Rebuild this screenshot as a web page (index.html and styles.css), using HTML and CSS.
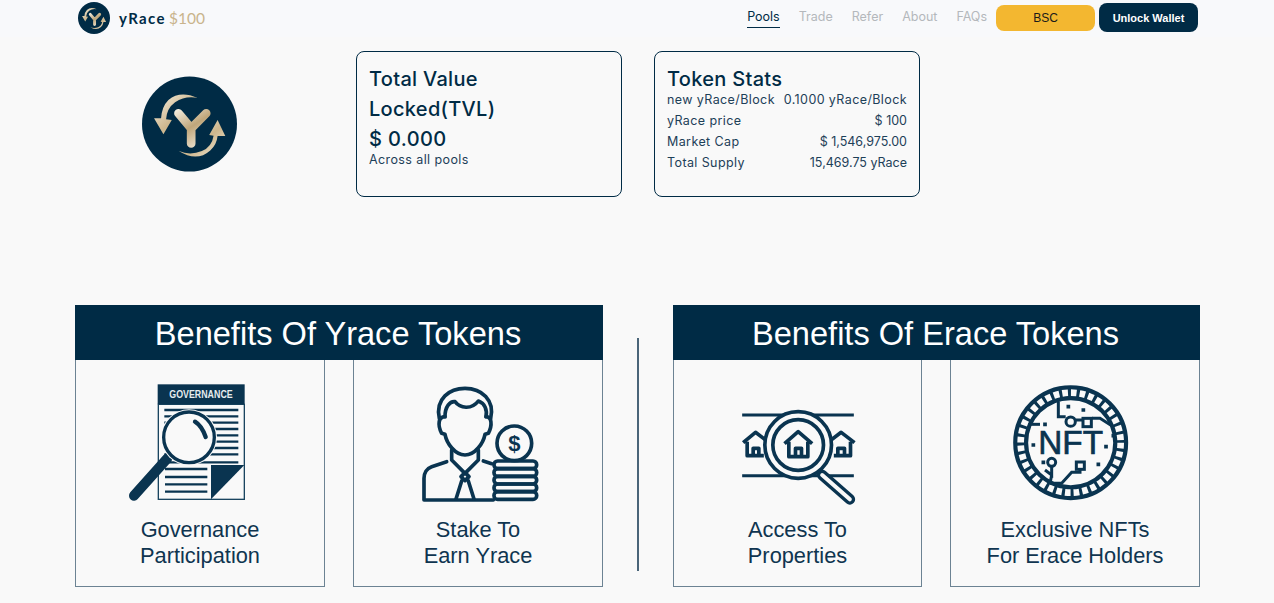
FILE: index.html
```html
<!DOCTYPE html>
<html lang="en">
<head>
<meta charset="utf-8">
<title>yRace</title>
<link rel="stylesheet" href="styles.css">
</head>
<body>
<svg class="defs" width="0" height="0" aria-hidden="true">
  <defs>
    <linearGradient id="gold" x1="0" y1="0" x2="1" y2="1">
      <stop offset="0" stop-color="#f7f1e4"/>
      <stop offset="0.55" stop-color="#cdb68c"/>
      <stop offset="1" stop-color="#f4ecdc"/>
    </linearGradient>
    <linearGradient id="goldY" gradientUnits="userSpaceOnUse" x1="135" y1="135" x2="210" y2="250">
      <stop offset="0" stop-color="#f5efe2"/>
      <stop offset="0.5" stop-color="#bfa67a"/>
      <stop offset="1" stop-color="#f0e8d8"/>
    </linearGradient>
    <symbol id="logo" viewBox="36 35 284 284">
      <circle cx="178" cy="177" r="142" fill="#002b45"/>
      <path d="M145 145 L183 190 L228 145 M183 190 V235" fill="none" stroke="url(#goldY)" stroke-width="26" stroke-linecap="round" stroke-linejoin="round"/>
      <path d="M202 99 Q150 76 115 105 Q95 125 93 160 L72 160 L100 208 L125 165 L108 163 Q110 130 135 112 Q165 92 202 99Z" fill="url(#gold)"/>
      <path d="M146 258 Q200 292 240 256 Q259 240 262 213 L285 213 L262 165 L237 210 L250 212 Q245 245 215 258 Q180 272 146 258Z" fill="url(#gold)"/>
    </symbol>
  </defs>
</svg>

<header class="topbar">
  <a class="brand" href="#">
    <svg class="brand-logo"><use href="#logo"/></svg>
    <span class="brand-name">yRace</span>
    <span class="brand-price">$100</span>
  </a>
  <nav class="nav">
    <a class="nav-link nav-active" href="#">Pools</a>
    <a class="nav-link" href="#">Trade</a>
    <a class="nav-link" href="#">Refer</a>
    <a class="nav-link" href="#">About</a>
    <a class="nav-link" href="#">FAQs</a>
  </nav>
  <button class="btn btn-chain">BSC</button>
  <button class="btn btn-wallet">Unlock Wallet</button>
</header>

<main>
  <section class="overview">
    <svg class="hero-logo"><use href="#logo"/></svg>
    <div class="stat-card">
      <h2 class="stat-title stat-title-tall">Total Value Locked(TVL)</h2>
      <div class="stat-amount">$ 0.000</div>
      <div class="stat-note">Across all pools</div>
    </div>
    <div class="stat-card">
      <h2 class="stat-title">Token Stats</h2>
      <div class="stat-row"><span>new yRace/Block</span><span>0.1000 yRace/Block</span></div>
      <div class="stat-row"><span>yRace price</span><span class="stat-num">$ 100</span></div>
      <div class="stat-row"><span>Market Cap</span><span class="stat-num">$ 1,546,975.00</span></div>
      <div class="stat-row"><span>Total Supply</span><span class="stat-num">15,469.75 yRace</span></div>
    </div>
  </section>

  <section class="benefits">
    <div class="group group-left">
      <h2 class="group-title">Benefits Of Yrace Tokens</h2>
      <div class="cards">
        <article class="card">
          <svg class="card-icon" viewBox="30 0 480 405">
            <rect x="145" y="88" width="258" height="285" fill="none" stroke="#1a4560" stroke-width="4"/>
            <rect x="143" y="28" width="261" height="60" fill="#0a3450"/>
            <text class="gov-text" x="273" y="70" textLength="190" lengthAdjust="spacingAndGlyphs">GOVERNANCE</text>
            <path d="M163 105H385M163 124H385M163 143H385M163 162H385M163 181H385M163 200H385M163 219H385M163 238H385M163 262H385M165 282H292M165 306H292M165 328H292M165 350H292" stroke="#0a3450" stroke-width="7" fill="none"/>
            <path d="M303 270H403L303 373Z" fill="#0a3450"/>
            <path d="M172 250L72 362" stroke="#0a3450" stroke-width="30" stroke-linecap="round"/>
            <circle cx="237" cy="187" r="84" fill="#f9f9f9"/>
            <circle cx="237" cy="187" r="76" fill="#f9f9f9" stroke="#0a3450" stroke-width="10"/>
            <path d="M255 140Q275 152 287 186" fill="none" stroke="#0a3450" stroke-width="13" stroke-linecap="round"/>
          </svg>
          <p class="card-label">Governance<br>Participation</p>
        </article>
        <article class="card">
          <svg class="card-icon" viewBox="-6 0 480 405" fill="none" stroke="#0a3450" stroke-width="11" stroke-linecap="round" stroke-linejoin="round">
            <path d="M118 130C105 70 150 40 195 40C245 40 285 75 272 130"/>
            <path d="M135 125C135 95 150 78 165 80C180 100 215 105 235 78C255 85 262 105 258 125"/>
            <path d="M135 125C115 125 112 150 125 175L135 178C140 205 165 240 195 240C225 240 250 205 255 178L265 175C278 150 275 125 258 125"/>
            <path d="M155 225V255L195 295L235 255V225"/>
            <path d="M140 260L95 275C80 280 72 295 72 310V375H280"/>
            <path d="M250 258L275 266"/>
            <path d="M183 305L195 293L207 305L195 317Z"/>
            <path d="M185 318L168 372M205 318L222 372"/>
            <circle cx="343" cy="205" r="52"/>
            <text class="coin-text" x="343" y="228">$</text>
            <rect x="282" y="258" width="128" height="23" rx="11"/>
            <rect x="282" y="281" width="128" height="23" rx="11"/>
            <rect x="282" y="304" width="128" height="23" rx="11"/>
            <rect x="282" y="327" width="128" height="23" rx="11"/>
            <rect x="282" y="350" width="128" height="23" rx="11"/>
          </svg>
          <p class="card-label">Stake To<br>Earn Yrace</p>
        </article>
      </div>
    </div>

    <div class="divider"></div>

    <div class="group group-right">
      <h2 class="group-title">Benefits Of Erace Tokens</h2>
      <div class="cards">
        <article class="card">
          <svg class="card-icon" viewBox="-7.5 -60 480 405" fill="none" stroke="#0a3450" stroke-width="11" stroke-linejoin="round">
            <path d="M65 60H400M65 242H400" stroke-width="9"/>
            <path d="M68 143L105 112L142 140M80 140V182H130M98 182V160H115V182"/>
            <path d="M402 143L362 112L325 140M390 140V182H340M352 182V160H372V182"/>
            <path d="M305 240L388 313" stroke-width="32" stroke-linecap="round"/>
            <path d="M305 240L388 313" stroke="#f9f9f9" stroke-width="12" stroke-linecap="round"/>
            <circle cx="233" cy="150" r="100" fill="#f9f9f9"/>
            <circle cx="233" cy="150" r="76"/>
            <path d="M192 146L233 110L275 146M205 140V185H262V140M225 185V160H243V185"/>
          </svg>
          <p class="card-label">Access To<br>Properties</p>
        </article>
        <article class="card">
          <svg class="card-icon" viewBox="-15 0 480 405" fill="none" stroke="#0a3450" stroke-width="9">
            <circle cx="212" cy="203" r="150" stroke-width="45"/>
            <circle cx="212" cy="203" r="150" stroke="#f9f9f9" stroke-width="20" pathLength="360" stroke-dasharray="6.5 3.5"/>
            <text class="nft-text" x="212" y="238">NFT</text>
            <path d="M175 80V125H197M228 135H248M276 130H300L340 155"/>
            <circle cx="212" cy="140" r="14"/>
            <rect x="249" y="130" width="25" height="25"/>
            <path d="M85 148H120"/>
            <circle cx="155" cy="262" r="12"/>
            <path d="M155 275V300L135 285M155 300L150 325"/>
            <rect x="229" y="261" width="24" height="22"/>
            <path d="M240 284V292H215L185 325H150"/>
            <path d="M205 95h.1M250 105h.1M135 148h.1M100 210h.1M318 215h.1M295 268h.1M130 262h.1M340 182h.1" stroke-width="11" stroke-linecap="square"/>
          </svg>
          <p class="card-label">Exclusive NFTs<br>For Erace Holders</p>
        </article>
      </div>
    </div>
  </section>
</main>
</body>
</html>
```
FILE: styles.css
```css
* { box-sizing: border-box; }

html, body {
  margin: 0;
  background: #f9f9f9;
  color: #002b45;
  font-family: "Inter", "Liberation Sans", sans-serif;
  overflow: hidden;
}

.defs { position: absolute; }

.topbar {
  display: flex;
  align-items: center;
  height: 37px;
  padding: 0 76px 2px 78px;
  background: #f8f9fb;
}

.brand {
  display: flex;
  align-items: center;
  margin-right: auto;
  text-decoration: none;
}

.brand-logo { width: 32px; height: 32px; margin-right: 9px; }

.brand-name {
  font-family: "Lato", sans-serif;
  font-size: 15px;
  font-weight: 700;
  letter-spacing: 1.4px;
  color: #002b45;
  margin-right: 3px;
}

.brand-price {
  font-family: "Lato", sans-serif;
  font-size: 15.5px;
  color: #c9b48c;
}

.nav { display: flex; gap: 19px; margin-right: 9px; }

.nav-link {
  font-size: 12.5px;
  line-height: 18px;
  color: #b4b8bc;
  text-decoration: none;
  border-bottom: 1px solid transparent;
  padding-bottom: 1px;
}

.nav-active { color: #002b45; border-bottom-color: #002b45; }

.btn {
  width: 99px;
  border: 0;
  border-radius: 8px;
  padding: 0;
  font-family: "Liberation Sans", sans-serif;
}

.btn-chain {
  height: 26px;
  background: #f3b730;
  color: #1a1a1a;
  font-size: 12px;
  margin-right: 4px;
}

.btn-wallet {
  height: 29px;
  background: #002b45;
  color: #fff;
  font-size: 11px;
  font-weight: 700;
}

.overview {
  display: flex;
  align-items: flex-start;
  padding: 14px 0 0 142px;
}

.hero-logo { width: 95px; height: 96px; margin: 25px 119px 0 0; }

.stat-card {
  width: 266px;
  height: 146px;
  margin-right: 32px;
  padding: 12px 12px 0;
  border: 1px solid #002b45;
  border-radius: 8px;
}

.stat-title {
  margin: 0;
  font-size: 20px;
  line-height: 30px;
  font-weight: 500;
  letter-spacing: 0.3px;
  color: #002b45;
}

.stat-title-tall { width: 150px; }

.stat-amount { font-size: 20px; line-height: 30px; font-weight: 500; letter-spacing: 0.4px; }

.stat-note { font-size: 12.5px; line-height: 12px; letter-spacing: 0.4px; color: #1d4058; }

.stat-row {
  display: flex;
  justify-content: space-between;
  font-size: 12.5px;
  line-height: 21px;
  letter-spacing: 0.4px;
  color: #1d4058;
}

.stat-row .stat-num { letter-spacing: 0; }

.stat-row:first-of-type { margin-top: -5px; }

.benefits {
  display: flex;
  align-items: flex-start;
  padding: 108px 0 0 75px;
}

.group-left { width: 528px; }
.group-right { width: 527px; }

.group-title {
  margin: 0;
  height: 55px;
  padding-right: 2px;
  background: #002b45;
  color: #fff;
  font-family: "Liberation Sans", sans-serif;
  font-size: 32.6px;
  font-weight: 400;
  line-height: 57px;
  text-align: center;
}

.cards {
  display: grid;
  grid-template-columns: 1fr 1fr;
  gap: 28px;
}

.group-right .cards { grid-template-columns: 249px 250px; }

.card {
  height: 227px;
  border: 1px solid #6c8393;
  border-top: 0;
  padding-top: 15px;
  text-align: center;
}

.card-icon { display: block; width: 160px; height: 135px; margin: 0 auto; }

.card-label {
  margin: 7px 0 0;
  font-family: "Liberation Sans", sans-serif;
  font-size: 21.8px;
  line-height: 26px;
  color: #0f3550;
}

.divider {
  width: 2px;
  height: 233px;
  margin: 33px 34px 0;
  background: #4a6579;
}

.gov-text {
  font-family: "Liberation Sans", sans-serif;
  font-size: 30px;
  font-weight: 700;
  text-anchor: middle;
  fill: #e6ecef;
  stroke: none;
}

.coin-text {
  font-family: "Liberation Sans", sans-serif;
  font-size: 66px;
  font-weight: 700;
  text-anchor: middle;
  fill: #0a3450;
  stroke: none;
}

.nft-text {
  font-family: "Liberation Sans", sans-serif;
  font-size: 100px;
  text-anchor: middle;
  fill: #0a3450;
  stroke: #0a3450;
  stroke-width: 2;
}
```
